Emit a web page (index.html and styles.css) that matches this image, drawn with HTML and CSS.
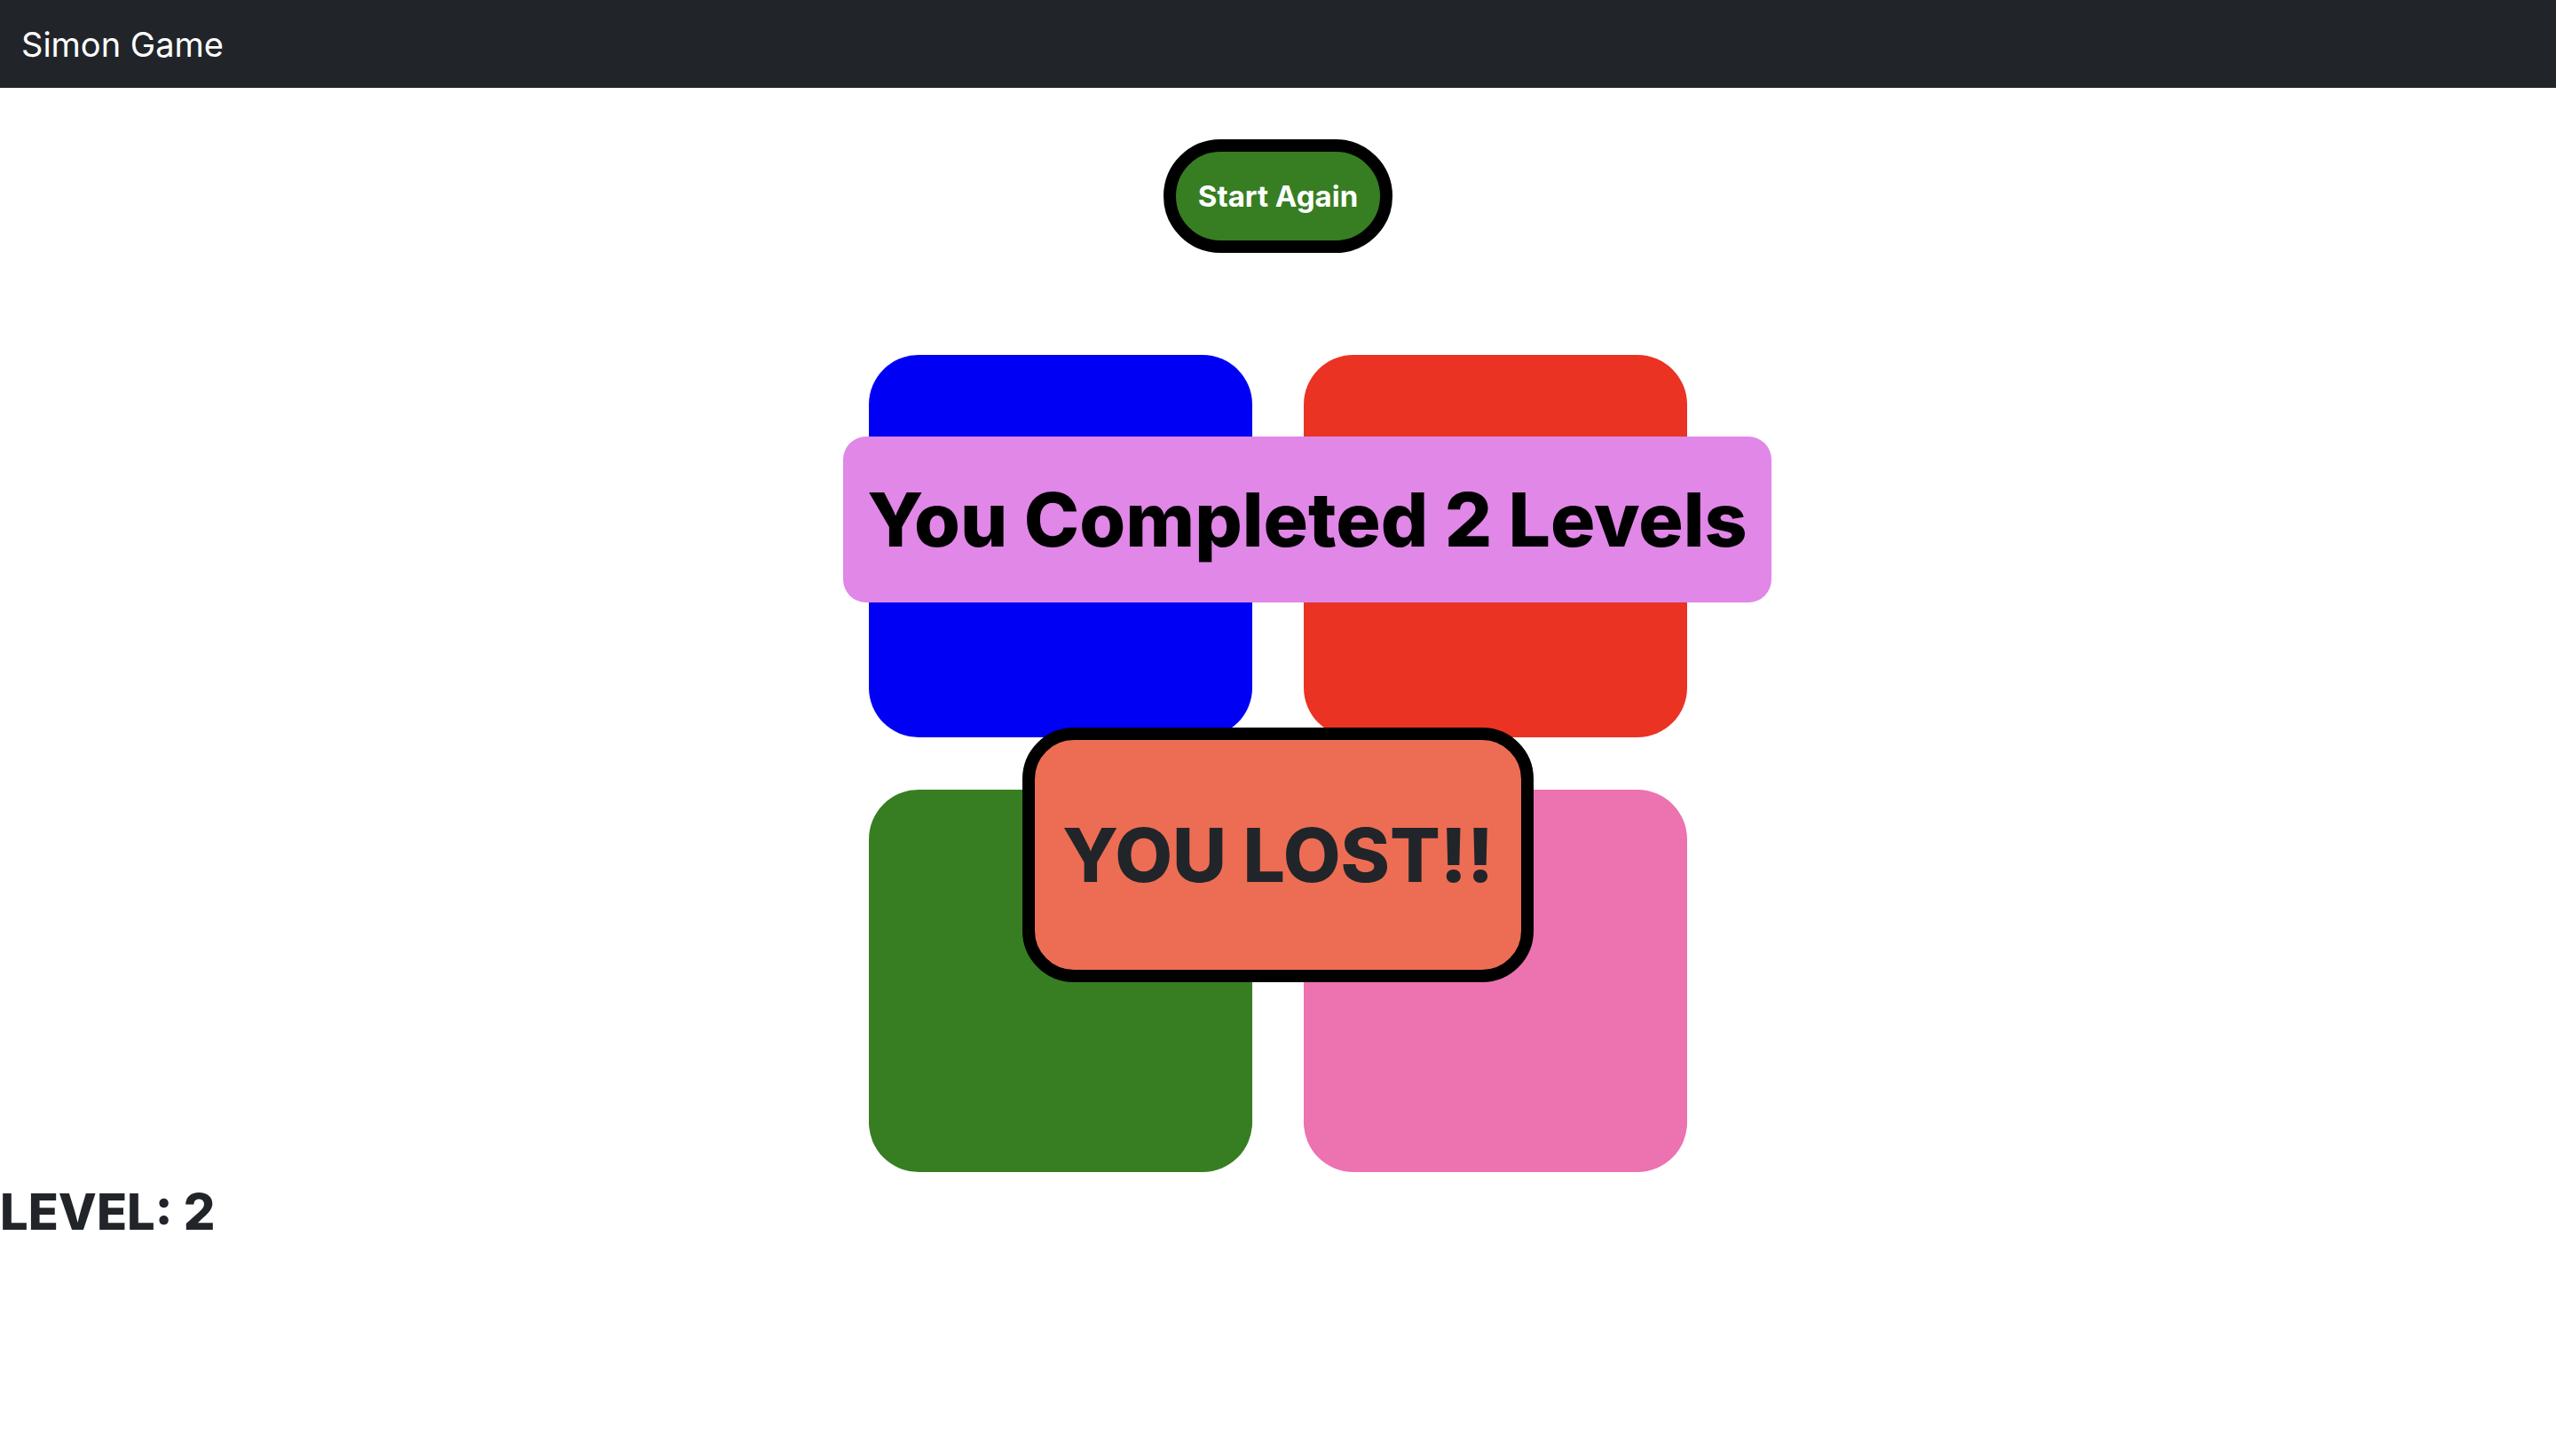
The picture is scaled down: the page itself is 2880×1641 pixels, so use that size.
FILE: index.html
```html
<!DOCTYPE html>
<html lang="en">
<head>
<meta charset="utf-8">
<title>Simon Game</title>
<link rel="stylesheet" href="styles.css">
</head>
<body>
<div class="page">
  <nav class="navbar"><span class="brand">Simon Game</span></nav>
  <main class="main">
    <button class="start-btn">Start Again</button>
    <div class="board">
      <div class="tile tile-blue"></div>
      <div class="tile tile-red"></div>
      <div class="tile tile-green"></div>
      <div class="tile tile-pink"></div>
    </div>
  </main>
  <h3 class="level">LEVEL: 2</h3>
  <div class="completed">You Completed 2 Levels</div>
  <div class="lost">YOU LOST!!</div>
</div>
</body>
</html>
```

FILE: styles.css
```css
* { box-sizing: border-box; }
html, body { margin: 0; padding: 0; background: #fff; }
body { font-family: Inter, "Noto Sans", sans-serif; color: #212529; }
.page { position: relative; min-height: 1641px; }
.navbar {
  height: 99px;
  background: #212529;
  display: flex;
  align-items: center;
  padding-left: 24px;
}
.brand { color: #fff; font-size: 38px; font-weight: 400; }
.main { display: flex; flex-direction: column; align-items: center; }
.start-btn {
  margin-top: 58px;
  width: 258px;
  height: 128px;
  border: 14px solid #000;
  border-radius: 64px;
  background: #377e22;
  color: #fff;
  font-family: Inter, sans-serif;
  font-weight: 700;
  font-size: 33px;
  padding: 0;
}
.board {
  margin-top: 115px;
  display: grid;
  grid-template-columns: 432px 432px;
  grid-auto-rows: 431px;
  column-gap: 58px;
  row-gap: 59px;
}
.tile { border-radius: 56px; }
.tile-blue { background: #0000f5; }
.tile-red { background: #ea3323; }
.tile-green { background: #377e22; }
.tile-pink { background: #ec72b0; }
.level {
  margin: 11px 0 0 0;
  font-size: 56px;
  font-weight: 800;
  color: #212529;
}
.completed {
  position: absolute;
  left: 950px;
  top: 492px;
  width: 1046px;
  height: 187px;
  border-radius: 26px;
  background: #e087e7;
  color: #000;
  font-size: 84px;
  font-weight: 800;
  display: flex;
  align-items: center;
  justify-content: center;
}
.lost {
  position: absolute;
  left: 1152px;
  top: 820px;
  width: 576px;
  height: 287px;
  border: 14px solid #000;
  border-radius: 58px;
  background: #ec6d54;
  color: #212529;
  font-size: 84px;
  font-weight: 800;
  display: flex;
  align-items: center;
  justify-content: center;
}
```
